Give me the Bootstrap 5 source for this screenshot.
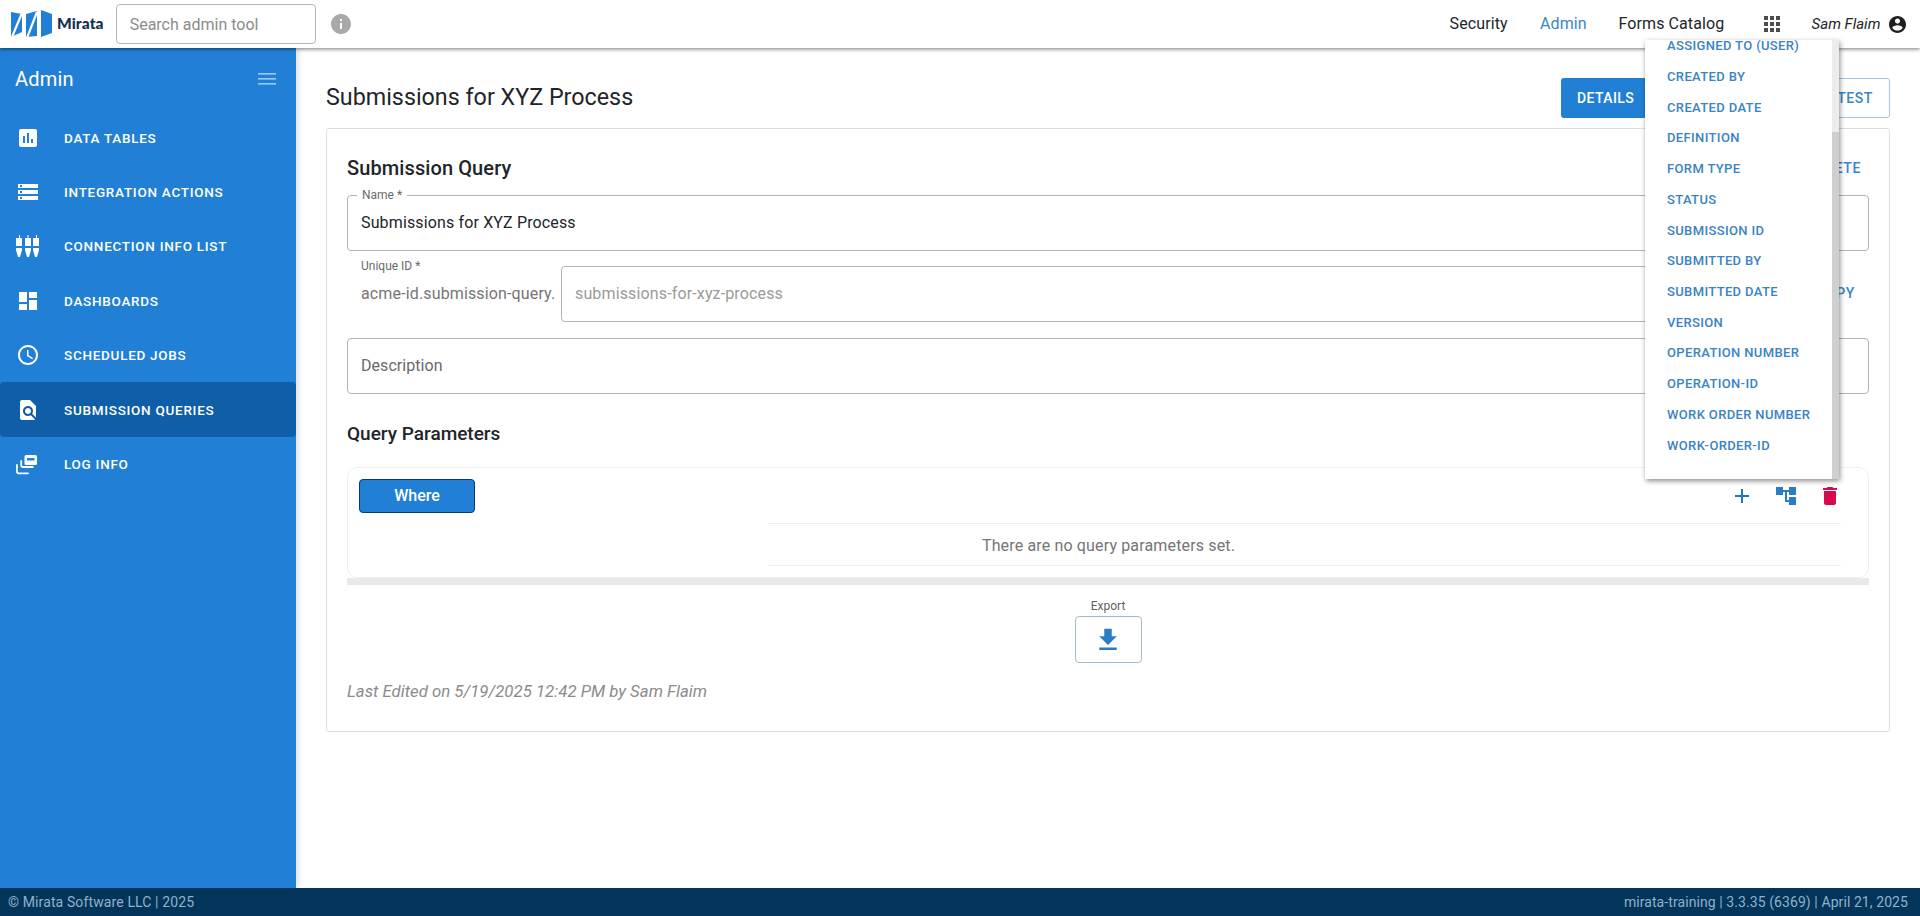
<!DOCTYPE html>
<html lang="en">
<head>
<meta charset="utf-8">
<title>Submission Query</title>
<link href="https://cdn.jsdelivr.net/npm/bootstrap@5.3.0/dist/css/bootstrap.min.css" rel="stylesheet">
<style>
html,body{height:100%;overflow:hidden}
body{font-family:Roboto,"Liberation Sans",sans-serif;color:#212529;background:#fff}
.shell{height:916px}
.topbar{height:48px;background:#fff;box-shadow:0 1px 4px rgba(0,0,0,.55);z-index:10;padding:0 14px 0 10px;flex:none}
.logo-word{font-family:Lato,sans-serif;font-weight:900;font-size:15.500px;color:#10304f;margin-left:4px;letter-spacing:.1px}
.search-box{width:200px;height:40px;margin-left:12px;font-size:16px;padding:0 13px;border-color:#b5b5b5;border-radius:4px;color:#555}
.search-box::placeholder{color:#8c8c8c}
.info-ico{margin-left:13px}
.top-link{font-size:16px;color:#212529;padding:0;text-decoration:none;letter-spacing:.1px}
.top-link.on{color:#3a86c8}
.gap-admin{margin-left:32.400px}
.gap-forms{margin-left:31.700px}
.grid-ico{margin-left:39.300px}
.who{font-size:15px;font-style:italic;margin-left:32px;margin-right:8.600px;white-space:nowrap}
.side{width:296px;background:#2180d5;flex:none;box-shadow:2px 0 6px rgba(60,60,90,.18);z-index:2}
.side-head{height:62.500px;padding:0 18px 0 15px;font-size:20px;color:#fff;letter-spacing:.2px}
.side-item{height:54.400px;padding:0 0 0 17px;color:#fff;font-size:13.500px;font-weight:500;letter-spacing:.72px;text-decoration:none;white-space:nowrap}
.side-item svg{width:24px;height:24px;margin:0 24.500px 0 -1.500px;flex:none;fill:#fff}
.side-item.on{background:#0f5ea8;border-radius:4px}
.work{padding:30px 30px 0 30px;min-width:0}
.page-title{font-size:23.300px;font-weight:400;margin:0}
.act{height:40px;font-size:14px;font-weight:500;letter-spacing:.4px;border-radius:3px 0 0 3px;padding:0 16px}
.act-a{width:92px;background:#2180d5;color:#fff;border:0;padding:0 22px 0 16px}
.act-b{width:238px;background:#fff;color:#3a86c8;border:1px solid #a9c6dc;border-radius:0 3px 3px 0;text-align:right;letter-spacing:.6px}
.sheet{margin-top:10px;height:604px;border-color:#dedede;border-radius:3px;padding:0 20px 0 20px}
.sheet-title{font-size:20px;font-weight:500;margin:0;line-height:24px;letter-spacing:.1px}
.sheet-head{margin-top:27px}
.flat-link{font-size:14px;font-weight:500;color:#3a86c8;letter-spacing:.6px;padding-right:8px}
.field{position:relative;height:56px;border:1px solid #b3b3b3;border-radius:4px;padding:0 13px;font-size:16px;letter-spacing:.14px}
.field-gap{margin-top:15px}
.field-desc{margin-top:16px;color:#6a6a6a;letter-spacing:.05px}
.field-tag{position:absolute;left:9px;top:-9px;background:#fff;padding:0 5px;font-size:12px;line-height:16px;color:#6a6a6a;letter-spacing:0}
.id-row{margin-top:14px;height:57px;position:relative}
.id-tag{position:absolute;left:14px;top:-7px;font-size:12px;line-height:16px;color:#6a6a6a}
.id-prefix{padding-left:14px;font-size:16px;color:#757575;width:214px;flex:none;white-space:nowrap;letter-spacing:.14px}
.id-box{flex:1 1 auto;color:#9a9a9a}
.copy-link{width:54px;flex:none;text-align:right;font-size:14px;font-weight:500;color:#3a86c8;letter-spacing:.6px;padding-right:14px}
.sub-title{font-size:19px;font-weight:500;margin:29px 0 0;line-height:22px}
.panel{margin-top:22px;height:111px;border:1px solid #efefef;border-radius:10px;padding:11px 12px 0 11px;position:relative}
.panel-band{height:7px;background:#e9e9e9}
.where{width:116px;height:34px;background:#2180d5;border:1px solid #0c3a63;border-radius:4px;color:#fff;font-weight:500;font-size:16px;padding:0}
.tool-set{padding-right:14px;gap:20px}
.tool-set svg{display:block}
.no-rows{margin:10px 15px 0 409px;padding:3px 392px 0 0;height:43px;border-top:1px solid #eee;border-bottom:1px solid #eee;color:#757575;font-size:16px;letter-spacing:.15px;white-space:nowrap}
.exp-wrap{margin-top:13px}
.exp-tag{font-size:12px;line-height:16px;color:#5f5f5f}
.exp-btn{width:67px;height:47px;margin-top:2px;background:#fff;border:1px solid #a3bccd;border-radius:4px;padding:0}
.edited{margin-top:16px;font-size:16.800px;font-style:italic;color:#8b8b8b}
.foot{height:28px;background:#03355a;color:#8fb1cc;font-size:14px;padding:0 12px 0 8px;flex:none;z-index:3}
.foot-left{letter-spacing:.12px}
.foot-right{letter-spacing:.08px}
.pick{position:absolute;left:1645px;top:40px;width:194px;height:439px;margin:0;padding:0;border:0;border-radius:0;background:#fff;box-shadow:1px 2px 5px rgba(0,0,0,.45);z-index:20}
.pick-rail{position:absolute;right:0;top:0;bottom:0;width:7px;background:#ececec}
.pick-thumb{position:absolute;right:0;top:92px;bottom:0;width:7px;background:#cfcfcf}
.pick-row{display:block;height:30.720px;line-height:30.720px;padding:0 0 0 22px;color:#3a83c4;font-size:13px;font-weight:500;letter-spacing:.36px;white-space:nowrap}
.pick-row:first-child{height:22px;line-height:11.200px}
</style>
</head>
<body>
<div class="shell d-flex flex-column">
  <nav class="topbar d-flex align-items-center">
    <svg width="43" height="28" viewBox="0 0 43 28" aria-hidden="true"><g fill="#2180d5"><path d="M1 2 12 4V22L1 27Z"/><path d="M16 4 27 1V26L16 27Z"/><path d="M31 0 42 4V23L31 27Z"/></g><path d="M2 27 12 3" stroke="#fff" stroke-width="2.200" fill="none"/><path d="M17 28 27 2" stroke="#fff" stroke-width="2.200" fill="none"/></svg>
    <span class="logo-word">Mirata</span>
    <input class="form-control search-box" type="text" placeholder="Search admin tool">
    <svg class="info-ico" width="24" height="24" viewBox="0 0 24 24" fill="#a9a9a9" aria-hidden="true"><path d="M12 2C6.480 2 2 6.480 2 12s4.480 10 10 10 10-4.480 10-10S17.520 2 12 2zm1 15h-2v-6h2v6zm0-8h-2V7h2v2z"/></svg>
    <div class="ms-auto d-flex align-items-center">
      <a class="top-link" href="#">Security</a>
      <a class="top-link on gap-admin" href="#">Admin</a>
      <a class="top-link gap-forms" href="#">Forms Catalog</a>
      <svg class="grid-ico" width="16" height="16" viewBox="0 0 16 16" fill="#4d4d4d" aria-hidden="true"><rect width="4" height="4"/><rect x="6" width="4" height="4"/><rect x="12" width="4" height="4"/><rect y="6" width="4" height="4"/><rect x="6" y="6" width="4" height="4"/><rect x="12" y="6" width="4" height="4"/><rect y="12" width="4" height="4"/><rect x="6" y="12" width="4" height="4"/><rect x="12" y="12" width="4" height="4"/></svg>
      <span class="who">Sam Flaim</span>
      <svg width="17" height="17" viewBox="2 2 20 20" fill="#1f1f1f" aria-hidden="true"><path d="M12 2C6.480 2 2 6.480 2 12s4.480 10 10 10 10-4.480 10-10S17.520 2 12 2zm0 3c1.660 0 3 1.340 3 3s-1.340 3-3 3-3-1.340-3-3 1.340-3 3-3zm0 14.200c-2.500 0-4.710-1.280-6-3.220.03-1.990 4-3.080 6-3.080 1.990 0 5.970 1.090 6 3.080-1.290 1.940-3.500 3.220-6 3.220z"/></svg>
    </div>
  </nav>

  <div class="d-flex flex-grow-1" style="min-height:0">
    <aside class="side d-flex flex-column">
      <div class="side-head d-flex align-items-center justify-content-between">
        <span>Admin</span>
        <svg width="20" height="14" viewBox="0 0 20 14" fill="#9ccbf2" aria-hidden="true"><rect width="18" height="1.600" y="1"/><rect width="18" height="1.600" y="6"/><rect width="18" height="1.600" y="11"/></svg>
      </div>
      <a class="side-item d-flex align-items-center" href="#"><svg viewBox="0 0 24 24"><path d="M19 3H5c-1.100 0-2 .9-2 2v14c0 1.100.9 2 2 2h14c1.100 0 2-.9 2-2V5c0-1.100-.9-2-2-2zM9 17H7v-7h2v7zm4 0h-2V7h2v10zm4 0h-2v-4h2v4z"/></svg>DATA TABLES</a>
      <a class="side-item d-flex align-items-center" href="#"><svg viewBox="0 0 24 24"><path d="M2 20h20v-4H2v4zm2-3h2v2H4v-2zM2 4v4h20V4H2zm4 3H4V5h2v2zm-4 7h20v-4H2v4zm2-3h2v2H4v-2z"/></svg>INTEGRATION ACTIONS</a>
      <a class="side-item d-flex align-items-center" href="#"><svg viewBox="0 0 24 24"><path d="M3 4V1h1v3h2v8H0V4zM0 14h6v2l-2 7H2L0 16zM11.500 4V1h1v3h2.500v8H9V4zM9 14h6v2l-2 7h-2L9 16zM20 4V1h1v3h2v8h-6V4zM17 14h6v2l-2 7h-2l-2-7z"/></svg>CONNECTION INFO LIST</a>
      <a class="side-item d-flex align-items-center" href="#"><svg viewBox="0 0 24 24"><path d="M3 13h8V3H3v10zm0 8h8v-6H3v6zm10 0h8V11h-8v10zm0-18v6h8V3h-8z"/></svg>DASHBOARDS</a>
      <a class="side-item d-flex align-items-center" href="#"><svg viewBox="0 0 24 24"><path d="M11.990 2C6.470 2 2 6.480 2 12s4.470 10 9.990 10C17.520 22 22 17.520 22 12S17.520 2 11.990 2zM12 20c-4.420 0-8-3.580-8-8s3.580-8 8-8 8 3.580 8 8-3.580 8-8 8zm.5-13H11v6l5.250 3.150.75-1.230-4.500-2.670z"/></svg>SCHEDULED JOBS</a>
      <a class="side-item on d-flex align-items-center" href="#"><svg viewBox="0 0 24 24"><path d="M20 19.590V8l-6-6H6c-1.100 0-1.990.9-1.990 2L4 20c0 1.100.89 2 1.990 2H18c.45 0 .85-.15 1.190-.4l-4.430-4.430c-.8.52-1.740.83-2.760.83-2.760 0-5-2.240-5-5s2.240-5 5-5 5 2.240 5 5c0 1.020-.31 1.960-.83 2.750L20 19.590zM9 13c0 1.660 1.340 3 3 3s3-1.340 3-3-1.340-3-3-3-3 1.340-3 3z"/></svg>SUBMISSION QUERIES</a>
      <a class="side-item d-flex align-items-center" href="#"><svg viewBox="0 0 24 24"><path d="M10 3h9.500a1.500 1.500 0 0 1 1.500 1.500v7a1.500 1.500 0 0 1-1.500 1.500H10a1.500 1.500 0 0 1-1.500-1.500v-7A1.500 1.500 0 0 1 10 3zm1 3v2.500h7.500V6z" fill-rule="evenodd"/><path d="M5.200 9v4.500a1.500 1.500 0 0 0 1.500 1.500h10.100" fill="none" stroke="#fff" stroke-width="1.800" stroke-linecap="round"/><path d="M.9 13v6.500a1.800 1.800 0 0 0 1.800 1.800H12" fill="none" stroke="#fff" stroke-width="1.800" stroke-linecap="round"/></svg>LOG INFO</a>
    </aside>

    <main class="work flex-grow-1">
      <div class="d-flex align-items-center justify-content-between">
        <h1 class="page-title">Submissions for XYZ Process</h1>
        <div class="btn-group" role="group">
          <button class="btn act act-a" type="button">DETAILS</button>
          <button class="btn act act-b" type="button">TEST</button>
        </div>
      </div>
      <section class="card sheet">
        <div class="sheet-head d-flex justify-content-between align-items-center">
          <h2 class="sheet-title">Submission Query</h2>
          <span class="flat-link">DELETE</span>
        </div>
        <div class="field field-gap d-flex align-items-center">
          <span class="field-tag">Name *</span>
          <span>Submissions for XYZ Process</span>
        </div>
        <div class="id-row d-flex align-items-center">
          <span class="id-tag">Unique ID *</span>
          <span class="id-prefix">acme-id.submission-query.</span>
          <div class="field id-box d-flex align-items-center"><span>submissions-for-xyz-process</span></div>
          <span class="copy-link">COPY</span>
        </div>
        <div class="field field-desc d-flex align-items-center">Description</div>
        <h3 class="sub-title">Query Parameters</h3>
        <div class="panel">
          <div class="d-flex justify-content-between align-items-center">
            <button class="btn where" type="button">Where</button>
            <div class="tool-set d-flex align-items-center">
              <svg width="24" height="24" viewBox="0 0 24 24" fill="#2676b8" aria-hidden="true"><path d="M19 13h-6v6h-2v-6H5v-2h6V5h2v6h6v2z"/></svg>
              <svg width="24" height="24" viewBox="0 0 24 24" fill="#2a7cc4" aria-hidden="true"><path d="M22 11V3h-7v3H9V3H2v8h7V8h2v10h4v3h7v-8h-7v3h-2V8h2v3z"/></svg>
              <svg width="24" height="24" viewBox="0 0 24 24" fill="#d80a4c" aria-hidden="true"><path d="M6 19c0 1.100.9 2 2 2h8c1.100 0 2-.9 2-2V7H6v12zM19 4h-3.500l-1-1h-5l-1 1H5v2h14V4z"/></svg>
            </div>
          </div>
          <div class="no-rows d-flex align-items-center justify-content-center">There are no query parameters set.</div>
        </div>
        <div class="panel-band"></div>
        <div class="exp-wrap d-flex flex-column align-items-center">
          <span class="exp-tag">Export</span>
          <button class="btn exp-btn d-flex align-items-center justify-content-center" type="button" aria-label="Export"><svg width="30" height="30" viewBox="0 0 24 24" fill="#2a7cc4" aria-hidden="true"><path d="M19 9h-4V3H9v6H5l7 7 7-7zM5 18v2h14v-2H5z"/></svg></button>
        </div>
        <div class="edited">Last Edited on 5/19/2025 12:42 PM by Sam Flaim</div>
      </section>
    </main>
  </div>

  <footer class="foot d-flex align-items-center justify-content-between">
    <span class="foot-left">© Mirata Software LLC | 2025</span>
    <span class="foot-right">mirata-training | 3.3.35 (6369) | April 21, 2025</span>
  </footer>
</div>

<div class="dropdown-menu d-block pick">
  <div>
    <span class="pick-row">ASSIGNED TO (USER)</span>
    <span class="pick-row">CREATED BY</span>
    <span class="pick-row">CREATED DATE</span>
    <span class="pick-row">DEFINITION</span>
    <span class="pick-row">FORM TYPE</span>
    <span class="pick-row">STATUS</span>
    <span class="pick-row">SUBMISSION ID</span>
    <span class="pick-row">SUBMITTED BY</span>
    <span class="pick-row">SUBMITTED DATE</span>
    <span class="pick-row">VERSION</span>
    <span class="pick-row">OPERATION NUMBER</span>
    <span class="pick-row">OPERATION-ID</span>
    <span class="pick-row">WORK ORDER NUMBER</span>
    <span class="pick-row">WORK-ORDER-ID</span>
  </div>
  <div class="pick-rail"></div>
  <div class="pick-thumb"></div>
</div>
<script src="https://cdn.jsdelivr.net/npm/bootstrap@5.3.0/dist/js/bootstrap.bundle.min.js"></script>
</body>
</html>
